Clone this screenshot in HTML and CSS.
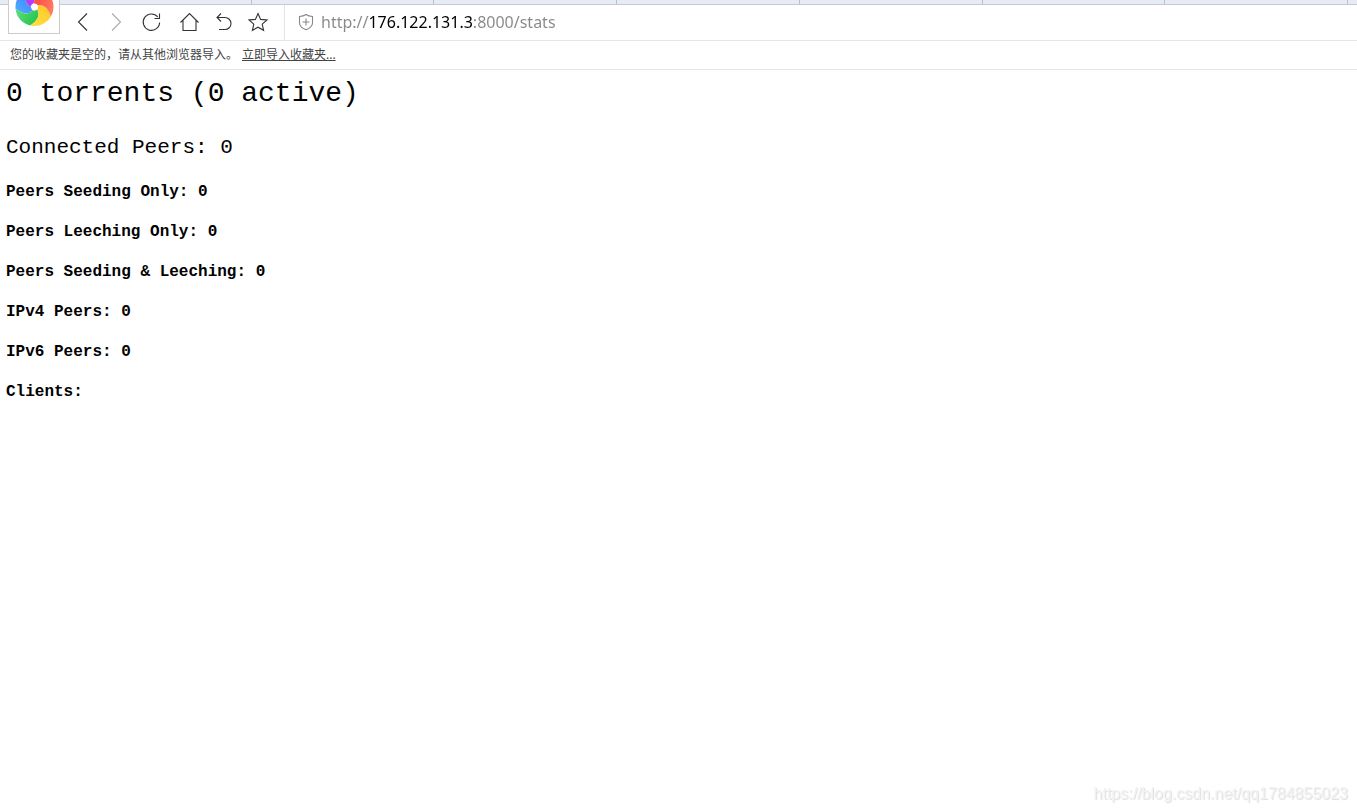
FILE: index.html
```html
<!DOCTYPE html>
<html lang="zh-CN">

<head>
    <meta charset="UTF-8">
    <meta name="viewport" content="width=device-width, initial-scale=1.0">
    <title>Stats</title>
    <link rel="stylesheet" href="styles.css">
</head>

<body>

    <header class="browser">
        <div class="tab-strip">
            <div class="tab"></div>
            <div class="tab"></div>
            <div class="tab"></div>
            <div class="tab"></div>
            <div class="tab"></div>
            <div class="tab"></div>
            <div class="tab"></div>
        </div>

        <button class="logo" aria-label="Menu">
            <svg width="40" height="40" viewBox="-20 -20 40 40">
                <defs>
                    <linearGradient id="red" x1="0" y1="0" x2="1" y2="1"><stop offset="0" stop-color="#ff4040" /><stop offset="1" stop-color="#ff8a6a" /></linearGradient>
                    <linearGradient id="yellow" x1="1" y1="0" x2="0" y2="1"><stop offset="0" stop-color="#ffc51f" /><stop offset="1" stop-color="#ffe14a" /></linearGradient>
                    <linearGradient id="green" x1="0" y1="0" x2="1" y2="1"><stop offset="0" stop-color="#5ee07c" /><stop offset="1" stop-color="#1fbf45" /></linearGradient>
                    <linearGradient id="blue" x1="0" y1="1" x2="1" y2="0"><stop offset="0" stop-color="#4fb4ff" /><stop offset="1" stop-color="#3f78ff" /></linearGradient>
                </defs>
                <g transform="translate(.5 0) rotate(-12)">
                    <path fill="#b23df5" d="M-3.4 -.8Q-11 -6.9 -3.6 -18.7A19 19 0 0 1 16.6 -9.2Q3.1 -12.6 -.2 -3.5Z" />
                    <path fill="url(#blue)" d="M-1.9 3Q-10 8.4 -18.9 -2.3A19 19 0 0 1 -3.6 -18.7Q-11 -6.9 -3.4 -.8Z" />
                    <path fill="url(#green)" d="M2.2 2.7Q4.9 12.1 -8 17.2A19 19 0 0 1 -18.9 -2.3Q-10 8.4 -1.9 3Z" />
                    <path fill="url(#yellow)" d="M3.2 -1.3Q13 -.9 13.9 13A19 19 0 0 1 -8 17.2Q4.9 12.1 2.2 2.7Z" />
                    <path fill="url(#red)" d="M-.2 -3.5Q3.1 -12.6 16.6 -9.2A19 19 0 0 1 13.9 13Q13 -.9 3.2 -1.3Z" />
                    <circle r="3.5" fill="#fff" />
                </g>
            </svg>
        </button>

        <div class="toolbar">
            <nav class="nav-buttons">
                <button aria-label="Back">
                    <svg width="20" height="20" viewBox="0 0 20 20"><path d="M14 1.5 5.5 10 14 18.5" /></svg>
                </button>
                <button class="disabled" aria-label="Forward">
                    <svg width="20" height="20" viewBox="0 0 20 20"><path d="M4 1.5 12.5 10 4 18.5" /></svg>
                </button>
                <button aria-label="Reload">
                    <svg width="20" height="20" viewBox="0 0 20 20"><path d="M16.6 10.5A8.2 8.2 0 1 1 14.8 5M16.5 1.5V6.5H11.5" /></svg>
                </button>
                <button aria-label="Home">
                    <svg width="20" height="20" viewBox="-2 0 20 20"><path d="M.5 10.5 9.5 1.5 18.5 10.5M3 8V18.5H16V8" /></svg>
                </button>
                <button aria-label="Undo">
                    <svg width="20" height="20" viewBox="-1 0 20 20"><path d="M7 1.5 3 5.5 7 9.5M3 5.5H11A6 6 0 0 1 11 17.5H5" /></svg>
                </button>
                <button aria-label="Favorite">
                    <svg width="20" height="20" viewBox="0 0 20 20"><path d="M10 1.5 12.6 7.4 19 8 14.2 12.2 15.6 18.3 10 15.2 4.4 18.3 5.8 12.2 1 8 7.4 7.4Z" /></svg>
                </button>
            </nav>
            <div class="address">
                <svg width="16" height="18" viewBox="0 0 16 18"><path d="M8 1.5C6 3 4 3.4 1.5 3.5V10C1.5 13.5 4.5 15.3 8 16.7C11.5 15.3 14.5 13.5 14.5 10V3.5C12 3.4 10 3 8 1.5ZM8 5.5V12.5M4.5 9H11.5" /></svg>
                <input type="text" class="url" aria-label="Address" spellcheck="false" value="http://176.122.131.3:8000/stats">
            </div>
        </div>

        <div class="bookmarks">
            <span>您的收藏夹是空的，请从其他浏览器导入。</span>
            <a href="#">立即导入收藏夹...</a>
        </div>
    </header>

    <main class="stats">
        <h1>0 torrents (0 active)</h1>
        <h2>Connected Peers: 0</h2>
        <h3>Peers Seeding Only: 0</h3>
        <h3>Peers Leeching Only: 0</h3>
        <h3>Peers Seeding &amp; Leeching: 0</h3>
        <h3>IPv4 Peers: 0</h3>
        <h3>IPv6 Peers: 0</h3>
        <h3>Clients:</h3>
    </main>

    <div class="watermark">https://blog.csdn.net/qq1784855023</div>

</body>

</html>
```

FILE: styles.css
```css
* {
    box-sizing: border-box;
}

body {
    margin: 0;
    background-color: white;
    color: black;
}

button {
    padding: 0;
    border: none;
    background: none;
    cursor: pointer;
}

/* Browser bars */
.browser {
    position: relative;
    font-family: "Noto Sans", "Noto Sans CJK SC", sans-serif;
}

.tab-strip {
    display: flex;
    height: 5px;
    padding: 0 9px 0 69px;
    background-color: #e6ebf4;
    border-bottom: 1px solid #c5cad6;
}

.tab {
    flex: 1;
    border-right: 1px solid #b9bfcc;
}

/* Hangs over the tab strip and the toolbar */
.logo {
    position: absolute;
    top: 0;
    left: 8px;
    width: 52px;
    height: 34px;
    display: flex;
    justify-content: center;
    align-items: flex-end;
    padding-bottom: 6px;
    background-color: white;
    border: 1px solid #ccc;
    border-top: none;
    overflow: hidden;
}

.logo svg {
    flex-shrink: 0;
}

.toolbar {
    display: flex;
    height: 36px;
    border-bottom: 1px solid #e3e5e8;
}

.nav-buttons {
    display: flex;
    align-items: center;
    gap: 15px;
    padding: 0 16px 1px 73px;
    border-right: 1px solid #e3e5e8;
}

.nav-buttons button {
    display: flex;
}

.toolbar svg {
    fill: none;
    stroke: #333;
    stroke-width: 1.1;
    overflow: visible;
}

.nav-buttons .disabled svg {
    stroke: #aaa;
}

.address {
    flex: 1;
    display: flex;
    align-items: center;
    gap: 7px;
    padding: 0 0 1px 13px;
}

.address svg {
    stroke: #888;
}

/* The host is darker than the rest of the address */
.url {
    flex: 1;
    padding: 0;
    border: none;
    outline: none;
    font-family: "Noto Sans", sans-serif;
    font-size: 16px;
    line-height: 24px;
    color: transparent;
    background: linear-gradient(to right, #888 47px, black 47px, black 152px, #888 152px);
    -webkit-background-clip: text;
    background-clip: text;
}

.bookmarks {
    display: flex;
    align-items: center;
    gap: 4px;
    height: 29px;
    padding: 0 0 2px 10px;
    font-size: 12px;
    color: #444;
    border-bottom: 1px solid #e3e5e8;
}

.bookmarks a {
    color: #444;
}

/* Page content */
.stats {
    padding: 6px;
    font-family: "Liberation Mono", monospace;
}

.stats h1,
.stats h2,
.stats h3 {
    margin: 0;
}

.stats h1 {
    margin-bottom: 22px;
    font-size: 28px;
    line-height: 36px;
    font-weight: normal;
}

.stats h2 {
    margin-bottom: 18px;
    font-size: 21px;
    line-height: 28px;
    font-weight: normal;
}

.stats h3 {
    margin-bottom: 16px;
    font-size: 16px;
    line-height: 24px;
    font-weight: bold;
}

.watermark {
    position: fixed;
    right: 9px;
    bottom: 9px;
    font-family: "Liberation Sans", sans-serif;
    font-size: 16px;
    line-height: 18px;
    color: #f2f2f2;
    text-shadow: 1px 1px 1px #ddd;
}
```
